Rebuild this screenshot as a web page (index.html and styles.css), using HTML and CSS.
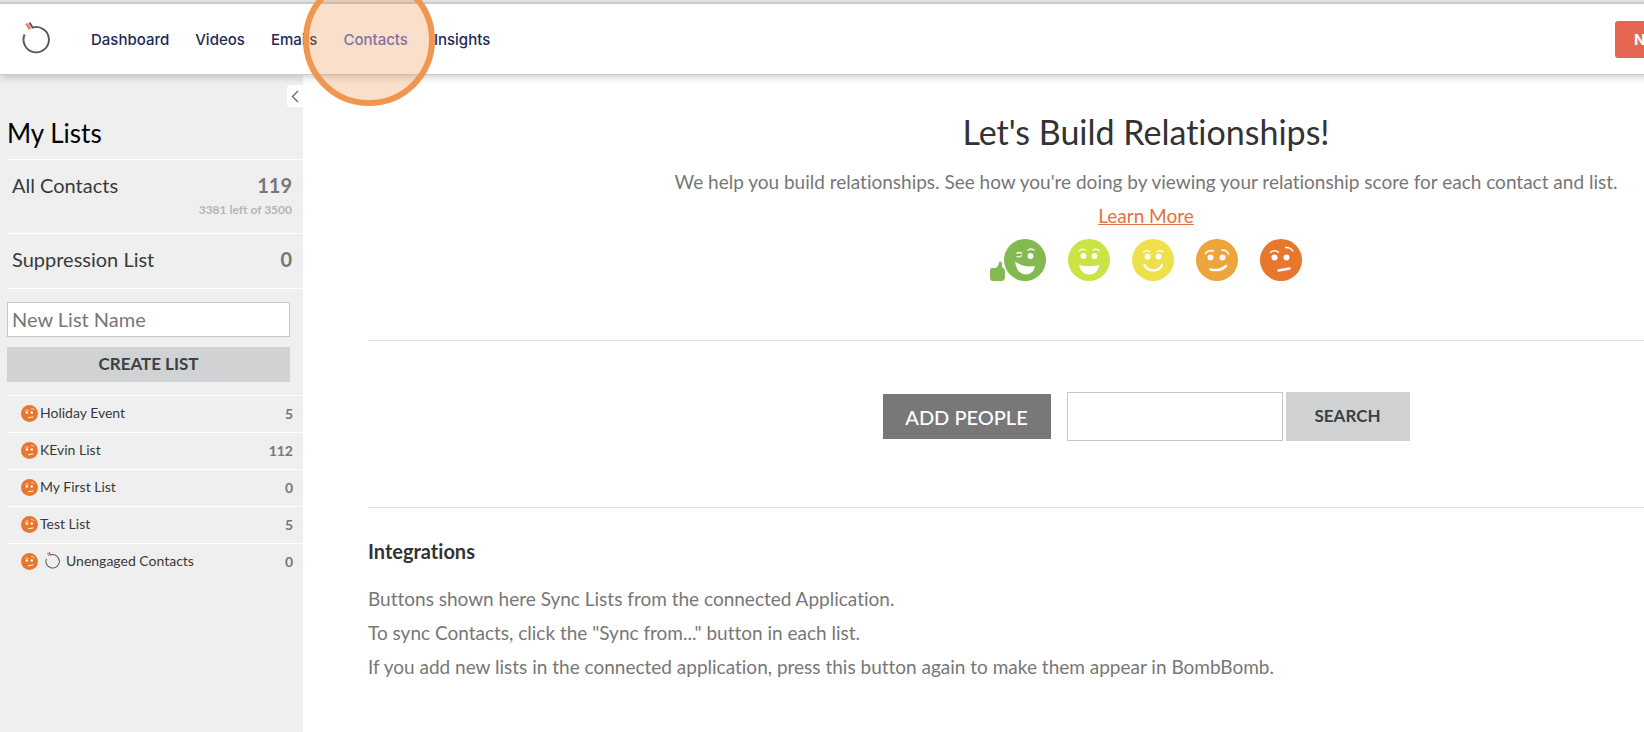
FILE: index.html
```html
<!DOCTYPE html>
<html lang="en">
<head>
  <meta charset="UTF-8" />
  <meta name="viewport" content="width=device-width, initial-scale=1.0"/>
  <title>Contacts</title>
  <link rel="stylesheet" href="styles.css">
</head>
<body>

  <!-- Shared icons -->
  <svg class="sprite" aria-hidden="true">
    <symbol id="logo" viewBox="0 0 30 34">
      <path d="M4.600 12.500A12.700 12.700 0 1 0 12.500 5.500L9.500 0.500" fill="none" stroke="#58585a" stroke-width="1.900"/>
      <path d="M6.500 1.500L10 7.300" fill="none" stroke="#e9826a" stroke-width="2.800"/>
    </symbol>
    <symbol id="face-low" viewBox="0 0 42 42">
      <circle cx="21" cy="21" r="21" fill="#e8762d"/>
      <circle cx="14.500" cy="18.500" r="3" fill="#fff"/>
      <circle cx="26.500" cy="18.500" r="3" fill="#fff"/>
      <path d="M10 13.500Q14 10 19 13.500M25 8.500Q31 8 33 12.500" fill="none" stroke="#fff" stroke-width="1.500"/>
      <path d="M18.500 31.500L29.500 29.500" fill="none" stroke="#fff" stroke-width="2.400" stroke-linecap="round"/>
    </symbol>
  </svg>

  <div class="page">
    <header class="topbar">
      <a href="#" class="logo" aria-label="Home"><svg width="30" height="34"><use href="#logo"/></svg></a>
      <nav class="nav">
        <a href="#">Dashboard</a>
        <a href="#">Videos</a>
        <a href="#">Emails</a>
        <a href="#" class="active">Contacts</a>
        <a href="#">Insights</a>
      </nav>
      <div class="actions">
        <button type="button" class="new-btn">New</button>
      </div>
    </header>

    <div class="layout">
      <aside class="sidebar">
        <button type="button" class="collapse" aria-label="Collapse lists">
          <svg width="8" height="13" viewBox="0 0 8 13"><path d="M7 1L1.500 6.500L7 12" fill="none" stroke="#666" stroke-width="1.300"/></svg>
        </button>
        <h2>My Lists</h2>

        <div class="summary">
          <div class="summary-row"><span>All Contacts</span><span class="total">119</span></div>
          <div class="quota">3381 left of 3500</div>
        </div>
        <div class="summary">
          <div class="summary-row"><span>Suppression List</span><span class="total">0</span></div>
        </div>

        <form class="create">
          <input type="text" name="list" placeholder="New List Name" aria-label="New List Name" />
          <button type="button">CREATE LIST</button>
        </form>

        <ul class="lists">
          <li><svg class="face"><use href="#face-low"/></svg><span class="name">Holiday Event</span><span class="count">5</span></li>
          <li><svg class="face"><use href="#face-low"/></svg><span class="name">KEvin List</span><span class="count">112</span></li>
          <li><svg class="face"><use href="#face-low"/></svg><span class="name">My First List</span><span class="count">0</span></li>
          <li><svg class="face"><use href="#face-low"/></svg><span class="name">Test List</span><span class="count">5</span></li>
          <li><svg class="face"><use href="#face-low"/></svg><svg class="mini-logo"><use href="#logo"/></svg><span class="name">Unengaged Contacts</span><span class="count">0</span></li>
        </ul>
      </aside>

      <main class="content">
        <section class="intro">
          <h1>Let's Build Relationships!</h1>
          <p>We help you build relationships. See how you're doing by viewing your relationship score for each contact and list.</p>
          <p><a href="#">Learn More</a></p>
          <div class="faces">
            <svg width="56" height="42" viewBox="0 0 56 42">
              <circle cx="35" cy="21" r="21" fill="#82b951"/>
              <path d="M2 29H5.500Q9 27 9 23Q11.500 21.500 12 24.500V28Q15 29.500 15 33V38Q15 42 11 42H3Q0 42 0 39V31Q0 29 2 29Z" fill="#82b951"/>
              <path d="M26.500 14.500Q29 12.500 32 14.500M26.500 17.500Q29 18.500 32 16.500M37.500 11.500Q41 8.500 44.500 11.500" fill="none" stroke="#fff" stroke-width="1.300"/>
              <circle cx="40.500" cy="17" r="2.900" fill="#fff"/>
              <path d="M25 22.500Q34 29 45 27Q43.500 35.500 35.500 35.500Q26.500 34.500 25 22.500Z" fill="#fff"/>
            </svg>
            <svg width="42" height="42" viewBox="0 0 42 42">
              <circle cx="21" cy="21" r="21" fill="#cbe345"/>
              <path d="M11 12Q15 8.500 18 11.500M24.500 11.500Q28 8.500 31.500 12" fill="none" stroke="#fff" stroke-width="1.300"/>
              <circle cx="15.500" cy="17" r="2.900" fill="#fff"/>
              <circle cx="26.500" cy="17" r="2.900" fill="#fff"/>
              <path d="M11 26Q21 28.500 31.500 26Q29.500 35.500 21.500 35.500Q13 35.500 11 26Z" fill="#fff"/>
            </svg>
            <svg width="42" height="42" viewBox="0 0 42 42">
              <circle cx="21" cy="21" r="21" fill="#eee04a"/>
              <path d="M11 13.500Q15 10 18 13M24.500 13Q28 10 31.500 13.500" fill="none" stroke="#fff" stroke-width="1.200"/>
              <circle cx="15.500" cy="17.500" r="2.900" fill="#fff"/>
              <circle cx="26.500" cy="17.500" r="2.900" fill="#fff"/>
              <path d="M12.500 26Q15 31.500 21.500 31.500Q27.500 31.500 30 26" fill="none" stroke="#fff" stroke-width="2.400" stroke-linecap="round"/>
            </svg>
            <svg width="42" height="42" viewBox="0 0 42 42">
              <circle cx="21" cy="21" r="21" fill="#eda43a"/>
              <path d="M9 15Q12 10.500 18 12M25 11Q30.500 10.500 33 15.500" fill="none" stroke="#fff" stroke-width="1.500"/>
              <circle cx="14.500" cy="18.500" r="3" fill="#fff"/>
              <circle cx="26.500" cy="18.500" r="3" fill="#fff"/>
              <path d="M14.500 30.500Q24.500 32.500 30 27" fill="none" stroke="#fff" stroke-width="2.600" stroke-linecap="round"/>
            </svg>
            <svg width="42" height="42"><use href="#face-low"/></svg>
          </div>
        </section>

        <section class="people">
          <button type="button" class="add-btn">ADD PEOPLE</button>
          <form class="search">
            <input type="text" name="q" aria-label="Search contacts" />
            <button type="button">SEARCH</button>
          </form>
        </section>

        <section class="integrations">
          <h3>Integrations</h3>
          <p>Buttons shown here Sync Lists from the connected Application.</p>
          <p>To sync Contacts, click the "Sync from..." button in each list.</p>
          <p>If you add new lists in the connected application, press this button again to make them appear in BombBomb.</p>
        </section>
      </main>
    </div>
  </div>

  <div class="click-marker"></div>

</body>
</html>
```
FILE: styles.css
```css
/* Base & Layout */
* {
  box-sizing: border-box;
}
body {
  margin: 0;
  font-family: Lato, 'Liberation Sans', sans-serif;
  font-variant-ligatures: none;
  color: #3a3a3a;
  background: #fff;
  overflow: hidden;
}
h1, h2, h3, p, ul {
  margin: 0;
  padding: 0;
  font-weight: normal;
}
button, input {
  font-family: inherit;
  border-radius: 0;
}
.sprite {
  display: none;
}
/* The app is wider than the window and runs off the right side */
.page {
  display: flex;
  flex-direction: column;
  width: calc(100% + 280px);
  min-height: 100vh;
  border-top: 2px solid #ebebeb;
}
.layout {
  display: flex;
  flex: 1;
}

/* Top bar */
.topbar {
  display: flex;
  align-items: center;
  height: 73px;
  padding-left: 20px;
  border-top: 2px solid #cbcbcb;
  border-bottom: 1px solid #ccc;
  background: #fff;
  box-shadow: 0 2px 8px rgba(0,0,0,0.2);
  position: relative;
  z-index: 1;
}
.logo svg {
  display: block;
}
.nav {
  display: flex;
  gap: 26px;
  margin-left: 41px;
  font-family: Inter, 'Liberation Sans', sans-serif;
  font-size: 15px;
  font-weight: 500;
}
.nav a {
  color: #1d2a57;
  text-decoration: none;
}
.nav .active {
  color: #5063cc;
}
.actions {
  width: 309px;
  margin-left: auto;
}
.new-btn {
  height: 37px;
  padding: 0 19px;
  border: none;
  border-radius: 3px;
  background: #e56651;
  color: #fff;
  font-family: Inter, 'Liberation Sans', sans-serif;
  font-size: 15px;
  font-weight: 700;
}

/* Sidebar */
.sidebar {
  position: relative;
  flex: none;
  width: 303px;
  padding: 40px 0 0 7px;
  background: #efefef;
}
.collapse {
  position: absolute;
  top: 10px;
  right: 0;
  display: flex;
  align-items: center;
  justify-content: center;
  width: 16px;
  height: 22px;
  padding: 0;
  border: none;
  border-radius: 3px 0 0 3px;
  background: #fff;
}
.sidebar h2 {
  height: 44px;
  font-size: 26px;
  line-height: 36px;
  color: #000;
}
.summary {
  padding: 13px 11px 17px 5px;
  border-top: 1px solid #fff;
}
.summary-row {
  display: flex;
  justify-content: space-between;
  font-size: 20px;
  line-height: 24px;
}
.total {
  color: #777;
  font-weight: bold;
}
.quota {
  padding-top: 6px;
  color: #b5b5b5;
  font-size: 12px;
  font-weight: bold;
  line-height: 13px;
  text-align: right;
}
.create {
  display: flex;
  flex-direction: column;
  gap: 10px;
  padding: 13px 13px 13px 0;
  border-top: 1px solid #fff;
}
.create input,
.create button {
  height: 35px;
}
.create input {
  padding: 0 4px 2px;
  border: 1px solid #c4c6c8;
  background: #fff;
  font-size: 20px;
}
.create input::placeholder {
  color: #777;
}
.create button,
.search button {
  padding-bottom: 3px;
  border: none;
  background: #d0d2d4;
  color: #3c4143;
  font-size: 17px;
  font-weight: bold;
}
.lists {
  list-style: none;
}
.lists li {
  display: flex;
  align-items: center;
  height: 37px;
  padding: 0 10px 2px 14px;
  border-top: 1px solid #fff;
  font-size: 14px;
}
.face {
  width: 17px;
  height: 17px;
  margin-right: 2px;
}
.mini-logo {
  width: 16px;
  height: 18px;
  margin: 0 6px 0 4px;
}
.name {
  padding-bottom: 2px;
}
.count {
  margin-left: auto;
  color: #777;
  font-weight: bold;
}

/* Content */
.content {
  flex: 1;
  padding: 0 0 0 65px;
  color: #777;
  font-size: 19px;
  line-height: 34px;
}
.intro {
  padding: 34px 0 59px;
  text-align: center;
}
.intro h1 {
  margin-bottom: 10px;
  color: #333;
  font-size: 34px;
  line-height: 46px;
}
.intro a {
  color: #e2713d;
}
.faces {
  display: flex;
  justify-content: center;
  gap: 22px;
  margin-top: 6px;
}
.people {
  display: flex;
  align-items: center;
  justify-content: center;
  gap: 16px;
  padding: 51px 0 66px;
  border-top: 1px solid #e2e2e2;
  border-bottom: 1px solid #e2e2e2;
}
.add-btn {
  width: 168px;
  height: 45px;
  border: none;
  background: #787878;
  color: #fff;
  font-size: 20px;
  font-weight: 500;
}
.search {
  display: flex;
  gap: 3px;
}
.search input {
  width: 216px;
  height: 49px;
  border: 1px solid #c4c6c8;
}
.search button {
  width: 124px;
}
.integrations {
  padding-top: 26px;
}
.integrations h3 {
  margin-bottom: 14px;
  color: #333;
  font-size: 20px;
  font-weight: bold;
}

/* Click highlight */
.click-marker {
  position: absolute;
  top: -26px;
  left: 303px;
  z-index: 2;
  width: 132px;
  height: 132px;
  border: 6px solid #f0964f;
  border-radius: 50%;
  background: rgba(240,150,79,0.3);
}
```
